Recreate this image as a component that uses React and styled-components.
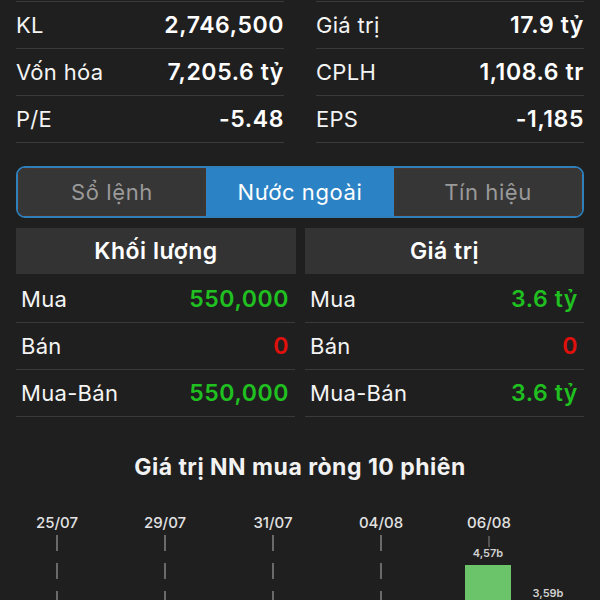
import React from 'react'
import styled, { createGlobalStyle } from 'styled-components'

const GlobalStyle = createGlobalStyle`
  html, body {
    margin: 0;
    padding: 0;
    background: #1f1f1f;
  }
  body {
    font-family: Inter, "Noto Sans", "DejaVu Sans", sans-serif;
    color: #fff;
    width: 600px;
    height: 600px;
    overflow: hidden;
  }
`

const Page = styled.div`
  padding: 1px 16px 0;
`

const StatsGrid = styled.div`
  display: grid;
  grid-template-columns: 1fr 1fr;
  column-gap: 32px;
`

const StatColumn = styled.div`
  border-top: 1px solid #3a3a3a;
`

const StatRow = styled.div`
  display: flex;
  align-items: center;
  justify-content: space-between;
  height: 46px;
  border-bottom: 1px solid #3a3a3a;
`

const Label = styled.span`
  font-size: 22px;
  letter-spacing: 0.3px;
  font-weight: 400;
  color: #f4f4f4;
`

const Value = styled.span`
  font-size: 23px;
  letter-spacing: 0.6px;
  font-weight: 600;
  color: ${p => p.$color || '#fff'};
`

const Tabs = styled.div`
  margin-top: 23px;
  display: grid;
  grid-template-columns: repeat(3, 1fr);
  height: 48px;
  border: 2px solid #2f7fba;
  border-radius: 9px;
  overflow: hidden;
`

const Tab = styled.div`
  display: flex;
  align-items: center;
  justify-content: center;
  font-size: 22px;
  letter-spacing: 0.6px;
  background: ${p => (p.$active ? '#2b83c6' : '#363636')};
  color: ${p => (p.$active ? '#fff' : '#9a9a9a')};
  box-shadow: ${p => (p.$active ? 'none' : 'inset 0 0 0 1px #4a3328')};
`

const Split = styled.div`
  margin-top: 10px;
  display: grid;
  grid-template-columns: 280px 1fr;
  column-gap: 9px;
`

const HeadCell = styled.div`
  height: 46px;
  background: #333;
  display: flex;
  align-items: center;
  justify-content: center;
  font-size: 23px;
  letter-spacing: 0.5px;
  font-weight: 600;
  margin-bottom: 2px;
`

const FlowRow = styled(StatRow)`
  padding: 0 6px 0 5px;
  margin-right: ${p => (p.$right ? '0' : '1px')};
`

const ChartTitle = styled.div`
  margin-top: 36px;
  text-align: center;
  font-size: 23px;
  letter-spacing: 0.5px;
  font-weight: 700;
  color: #f2f2f2;
`

const ChartWrap = styled.div`
  margin: 17px -16px 0;
  line-height: 0;
`

const GREEN = '#1fc01f'
const RED = '#e0100c'

const stats = [
  [['KL', '2,746,500'], ['Vốn hóa', '7,205.6 tỷ'], ['P/E', '-5.48']],
  [['Giá trị', '17.9 tỷ'], ['CPLH', '1,108.6 tr'], ['EPS', '-1,185']],
]

const flows = [
  { title: 'Khối lượng', rows: [['Mua', '550,000', GREEN], ['Bán', '0', RED], ['Mua-Bán', '550,000', GREEN]] },
  { title: 'Giá trị', rows: [['Mua', '3.6 tỷ', GREEN], ['Bán', '0', RED], ['Mua-Bán', '3.6 tỷ', GREEN]] },
]

const dates = ['25/07', '29/07', '31/07', '04/08', '06/08']

const Chart = () => (
  <svg width="600" height="110" viewBox="0 0 600 110">
    {dates.map((d, i) => {
      const x = 57 + i * 108
      return (
        <g key={d}>
          <text x={x} y="30" textAnchor="middle" fontSize="15" fontWeight="500" fill="#e2e2e2">{d}</text>
          {i < 4 ? (
            <line x1={x} y1="37" x2={x} y2="110" stroke="#6a6a6a" strokeWidth="2" strokeDasharray="16 12" />
          ) : (
            <line x1={x} y1="38" x2={x} y2="49" stroke="#888" strokeWidth="1" />
          )}
        </g>
      )
    })}
    <text x="488" y="59" textAnchor="middle" fontSize="11" fontWeight="600" fill="#cfcfcf">4,57b</text>
    <rect x="465" y="67" width="46" height="60" fill="#6cc46a" />
    <text x="548" y="99" textAnchor="middle" fontSize="11" fontWeight="600" fill="#cfcfcf">3,59b</text>
  </svg>
)

const App = () => {
  return (
    <>
      <GlobalStyle />
      <Page>
        <StatsGrid>
          {stats.map((col, ci) => (
            <StatColumn key={ci}>
              {col.map(([l, v]) => (
                <StatRow key={l}>
                  <Label>{l}</Label>
                  <Value>{v}</Value>
                </StatRow>
              ))}
            </StatColumn>
          ))}
        </StatsGrid>

        <Tabs>
          <Tab>Sổ lệnh</Tab>
          <Tab $active>Nước ngoài</Tab>
          <Tab>Tín hiệu</Tab>
        </Tabs>

        <Split>
          {flows.map((f, fi) => (
            <div key={f.title}>
              <HeadCell>{f.title}</HeadCell>
              {f.rows.map(([l, v, c]) => (
                <FlowRow key={l} $right={fi === 1}>
                  <Label>{l}</Label>
                  <Value $color={c}>{v}</Value>
                </FlowRow>
              ))}
            </div>
          ))}
        </Split>

        <ChartTitle>Giá trị NN mua ròng 10 phiên</ChartTitle>
        <ChartWrap>
          <Chart />
        </ChartWrap>
      </Page>
    </>
  )
}

export default App
